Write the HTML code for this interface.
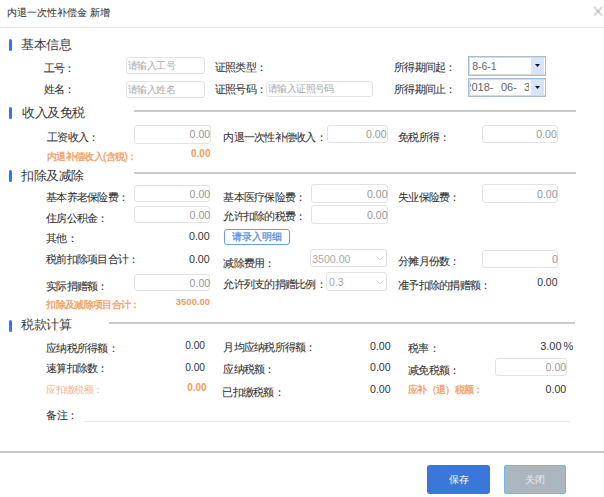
<!DOCTYPE html><html><head><meta charset="utf-8"><style>
*{margin:0;padding:0;box-sizing:border-box}
html,body{width:604px;height:497px;overflow:hidden;background:#fff}
body{position:relative;font-family:"Liberation Sans",sans-serif;}
.t{position:absolute;white-space:nowrap;line-height:1.5}
.b{position:absolute}
</style></head><body><div class="b" style="left:0px;top:27px;width:604px;height:1px;background:#e9e9e9"></div><svg class="b" style="left:588px;top:1px" width="16" height="16" viewBox="0 0 16 16"><line x1="6.6" y1="6.6" x2="13.6" y2="14.2" stroke="#000" stroke-opacity="0.14" stroke-width="2.3" stroke-linecap="round"/><line x1="13.6" y1="6.6" x2="6.6" y2="14.2" stroke="#000" stroke-opacity="0.14" stroke-width="2.3" stroke-linecap="round"/></svg><div class="b" style="left:8.7px;top:39px;width:3.200000000000001px;height:12.200000000000003px;background:#3374f3;border-radius:1.6px"></div><div class="b" style="left:8.7px;top:107px;width:3.200000000000001px;height:12.200000000000003px;background:#3374f3;border-radius:1.6px"></div><div class="b" style="left:8.7px;top:170px;width:3.200000000000001px;height:12.199999999999989px;background:#3374f3;border-radius:1.6px"></div><div class="b" style="left:8.7px;top:320px;width:3.200000000000001px;height:12.199999999999989px;background:#3374f3;border-radius:1.6px"></div><div class="b" style="left:134px;top:110px;width:442px;height:2px;background:#cbcbcb"></div><div class="b" style="left:134px;top:172px;width:442px;height:2px;background:#cbcbcb"></div><div class="b" style="left:109px;top:322px;width:466px;height:2px;background:#cbcbcb"></div><div class="b" style="left:126px;top:57px;width:79px;height:17px;border:1px solid #e3e3e3;border-radius:3px;background:#fff"></div><div class="b" style="left:126px;top:81px;width:79px;height:17px;border:1px solid #e3e3e3;border-radius:3px;background:#fff"></div><div class="b" style="left:266px;top:81px;width:107px;height:16px;border:1px solid #e3e3e3;border-radius:3px;background:#fff"></div><div class="b" style="left:134px;top:125px;width:77px;height:19px;border:1px solid #e3e3e3;border-radius:3px;background:#fff"></div><div class="b" style="left:327px;top:125px;width:61px;height:18px;border:1px solid #e3e3e3;border-radius:3px;background:#fff"></div><div class="b" style="left:482px;top:125px;width:76px;height:18px;border:1px solid #e3e3e3;border-radius:3px;background:#fff"></div><div class="b" style="left:134px;top:185px;width:76px;height:17px;border:1px solid #e3e3e3;border-radius:3px;background:#fff"></div><div class="b" style="left:134px;top:206px;width:76px;height:17px;border:1px solid #e3e3e3;border-radius:3px;background:#fff"></div><div class="b" style="left:311px;top:184px;width:77px;height:19px;border:1px solid #e3e3e3;border-radius:3px;background:#fff"></div><div class="b" style="left:311px;top:205px;width:77px;height:19px;border:1px solid #e3e3e3;border-radius:3px;background:#fff"></div><div class="b" style="left:482px;top:184px;width:76px;height:19px;border:1px solid #e3e3e3;border-radius:3px;background:#fff"></div><div class="b" style="left:134px;top:274px;width:76px;height:17px;border:1px solid #e3e3e3;border-radius:3px;background:#fff"></div><div class="b" style="left:310px;top:249px;width:77px;height:18px;border:1px solid #e3e3e3;border-radius:3px;background:#fff"></div><div class="b" style="left:326px;top:272px;width:61px;height:19px;border:1px solid #e3e3e3;border-radius:3px;background:#fff"></div><div class="b" style="left:482px;top:250px;width:76px;height:18px;border:1px solid #e3e3e3;border-radius:3px;background:#fff"></div><div class="b" style="left:495px;top:358px;width:72px;height:18px;border:1px solid #e3e3e3;border-radius:3px;background:#fff"></div><svg class="b" style="left:375.5px;top:256px" width="8" height="5" viewBox="0 0 8 5"><path d="M0.5 0.5 L4 4 L7.5 0.5" fill="none" stroke="#d8d8d8" stroke-width="1"/></svg><svg class="b" style="left:375.5px;top:279.5px" width="8" height="5" viewBox="0 0 8 5"><path d="M0.5 0.5 L4 4 L7.5 0.5" fill="none" stroke="#d8d8d8" stroke-width="1"/></svg><div class="b" style="left:468px;top:56px;width:78px;height:20px;border:1px solid #a9bcd6;background:#fff"></div><div class="b" style="left:469px;top:57px;width:76px;height:18px;border:1px solid #d9d9d9;border-right:none"></div><div class="b" style="left:531px;top:58px;width:13px;height:16px;background:#d7e5f7"></div><svg class="b" style="left:535px;top:64.0px" width="5" height="3" viewBox="0 0 5 3"><path d="M0 0 L5 0 L2.5 3 Z" fill="#111"/></svg><div class="b" style="left:468px;top:78px;width:78px;height:19px;border:1px solid #a9bcd6;background:#fff"></div><div class="b" style="left:469px;top:79px;width:76px;height:17px;border:1px solid #d9d9d9;border-right:none"></div><div class="b" style="left:531px;top:80px;width:13px;height:15px;background:#d7e5f7"></div><svg class="b" style="left:535px;top:85.5px" width="5" height="3" viewBox="0 0 5 3"><path d="M0 0 L5 0 L2.5 3 Z" fill="#111"/></svg><div class="b" style="left:224px;top:229px;width:66px;height:16px;border:1px solid #6a9de9;border-radius:3px;background:#fff"></div><div class="b" style="left:84px;top:421px;width:486px;height:1px;background:#e8e8e8"></div><div class="b" style="left:0px;top:451px;width:604px;height:2px;background:#c6c6c6"></div><div class="b" style="left:427px;top:465px;width:63px;height:29px;background:#3b77d9;border-radius:3px"></div><div class="b" style="left:504px;top:465px;width:62px;height:29px;background:#acb6be;border:1px solid #6cb8ec;border-radius:2px"></div><div class="b" style="left:470px;top:79px;width:59px;height:17px;overflow:hidden;color:#666;font-size:11px"><div class="t" style="right:35.5px;top:0px;line-height:17px">2018-</div><div class="t" style="left:31px;top:0px;line-height:17px">06-</div><div class="t" style="left:54px;top:0px;line-height:17px">30</div></div><div id="title" class="t" style="left:7.00px;top:5.50px;font-size:9.70px;color:#333;font-weight:normal;letter-spacing:0px;-webkit-text-stroke:0.07px #333">内退一次性补偿金 新增</div><div id="s1" class="t" style="left:21.20px;top:35.35px;font-size:13.00px;color:#3a3a3a;font-weight:normal;letter-spacing:-0.5px">基本信息</div><div id="s2" class="t" style="left:22.00px;top:103.10px;font-size:13.00px;color:#3a3a3a;font-weight:normal;letter-spacing:-0.5px">收入及免税</div><div id="s3" class="t" style="left:21.40px;top:165.50px;font-size:13.00px;color:#3a3a3a;font-weight:normal;letter-spacing:-0.5px">扣除及减除</div><div id="s4" class="t" style="left:21.40px;top:315.40px;font-size:13.00px;color:#3a3a3a;font-weight:normal;letter-spacing:-0.5px">税款计算</div><div id="l1" class="t" style="left:43.60px;top:60.00px;font-size:11.00px;color:#333;font-weight:normal;letter-spacing:-0.75px;-webkit-text-stroke:0.07px #333">工号：</div><div id="l2" class="t" style="left:43.60px;top:81.20px;font-size:11.00px;color:#333;font-weight:normal;letter-spacing:-0.75px;-webkit-text-stroke:0.07px #333">姓名：</div><div id="l3" class="t" style="left:214.80px;top:59.20px;font-size:11.00px;color:#333;font-weight:normal;letter-spacing:-0.75px;-webkit-text-stroke:0.07px #333">证照类型：</div><div id="l4" class="t" style="left:214.80px;top:80.75px;font-size:11.00px;color:#333;font-weight:normal;letter-spacing:-0.75px;-webkit-text-stroke:0.07px #333">证照号码：</div><div id="l5" class="t" style="left:394.00px;top:58.85px;font-size:11.00px;color:#333;font-weight:normal;letter-spacing:-0.75px;-webkit-text-stroke:0.07px #333">所得期间起：</div><div id="l6" class="t" style="left:394.00px;top:80.50px;font-size:11.00px;color:#333;font-weight:normal;letter-spacing:-0.75px;-webkit-text-stroke:0.07px #333">所得期间止：</div><div id="l7" class="t" style="left:47.00px;top:128.80px;font-size:11.00px;color:#333;font-weight:normal;letter-spacing:-0.75px;-webkit-text-stroke:0.07px #333">工资收入：</div><div id="l8" class="t" style="left:47.00px;top:149.25px;font-size:10.00px;color:#f39c5f;font-weight:normal;letter-spacing:-0.65px;-webkit-text-stroke:0.3px #f39c5f">内退补偿收入(含税)：</div><div id="l9" class="t" style="left:223.40px;top:128.50px;font-size:11.00px;color:#333;font-weight:normal;letter-spacing:-0.75px;-webkit-text-stroke:0.07px #333">内退一次性补偿收入：</div><div id="l10" class="t" style="left:398.00px;top:129.00px;font-size:11.00px;color:#333;font-weight:normal;letter-spacing:-0.75px;-webkit-text-stroke:0.07px #333">免税所得：</div><div id="l11" class="t" style="left:46.20px;top:188.55px;font-size:11.00px;color:#333;font-weight:normal;letter-spacing:-0.75px;-webkit-text-stroke:0.07px #333">基本养老保险费：</div><div id="l12" class="t" style="left:46.20px;top:209.90px;font-size:11.00px;color:#333;font-weight:normal;letter-spacing:-0.75px;-webkit-text-stroke:0.07px #333">住房公积金：</div><div id="l13" class="t" style="left:46.20px;top:230.00px;font-size:11.00px;color:#333;font-weight:normal;letter-spacing:-0.75px;-webkit-text-stroke:0.07px #333">其他：</div><div id="l14" class="t" style="left:223.40px;top:189.05px;font-size:11.00px;color:#333;font-weight:normal;letter-spacing:-0.75px;-webkit-text-stroke:0.07px #333">基本医疗保险费：</div><div id="l15" class="t" style="left:223.40px;top:208.20px;font-size:11.00px;color:#333;font-weight:normal;letter-spacing:-0.75px;-webkit-text-stroke:0.07px #333">允许扣除的税费：</div><div id="l16" class="t" style="left:398.00px;top:188.95px;font-size:11.00px;color:#333;font-weight:normal;letter-spacing:-0.75px;-webkit-text-stroke:0.07px #333">失业保险费：</div><div id="l17" class="t" style="left:46.20px;top:251.00px;font-size:11.00px;color:#333;font-weight:normal;letter-spacing:-0.75px;-webkit-text-stroke:0.07px #333">税前扣除项目合计：</div><div id="l18" class="t" style="left:46.20px;top:277.50px;font-size:11.00px;color:#333;font-weight:normal;letter-spacing:-0.75px;-webkit-text-stroke:0.07px #333">实际捐赠额：</div><div id="l19" class="t" style="left:46.20px;top:296.50px;font-size:10.00px;color:#f39c5f;font-weight:normal;letter-spacing:-0.65px;-webkit-text-stroke:0.3px #f39c5f">扣除及减除项目合计：</div><div id="l20" class="t" style="left:223.40px;top:254.65px;font-size:11.00px;color:#333;font-weight:normal;letter-spacing:-0.75px;-webkit-text-stroke:0.07px #333">减除费用：</div><div id="l21" class="t" style="left:223.40px;top:275.70px;font-size:11.00px;color:#333;font-weight:normal;letter-spacing:-0.75px;-webkit-text-stroke:0.07px #333">允许列支的捐赠比例：</div><div id="l22" class="t" style="left:398.00px;top:252.95px;font-size:11.00px;color:#333;font-weight:normal;letter-spacing:-0.75px;-webkit-text-stroke:0.07px #333">分摊月份数：</div><div id="l23" class="t" style="left:398.00px;top:276.55px;font-size:11.00px;color:#333;font-weight:normal;letter-spacing:-0.75px;-webkit-text-stroke:0.07px #333">准予扣除的捐赠额：</div><div id="l24" class="t" style="left:46.20px;top:339.50px;font-size:11.00px;color:#333;font-weight:normal;letter-spacing:-0.75px;-webkit-text-stroke:0.07px #333">应纳税所得额：</div><div id="l25" class="t" style="left:46.20px;top:359.65px;font-size:11.00px;color:#333;font-weight:normal;letter-spacing:-0.75px;-webkit-text-stroke:0.07px #333">速算扣除数：</div><div id="l26" class="t" style="left:46.20px;top:382.45px;font-size:10.00px;color:#f6b48e;font-weight:normal;letter-spacing:-0.65px">应扣缴税额：</div><div id="l27" class="t" style="left:46.40px;top:406.90px;font-size:11.00px;color:#333;font-weight:normal;letter-spacing:-0.75px;-webkit-text-stroke:0.07px #333">备注：</div><div id="l28" class="t" style="left:223.40px;top:339.40px;font-size:11.00px;color:#333;font-weight:normal;letter-spacing:-0.75px;-webkit-text-stroke:0.07px #333">月均应纳税所得额：</div><div id="l29" class="t" style="left:223.40px;top:361.45px;font-size:11.00px;color:#333;font-weight:normal;letter-spacing:-0.75px;-webkit-text-stroke:0.07px #333">应纳税额：</div><div id="l30" class="t" style="left:222.40px;top:384.35px;font-size:11.00px;color:#333;font-weight:normal;letter-spacing:-0.75px;-webkit-text-stroke:0.07px #333">已扣缴税额：</div><div id="l31" class="t" style="left:408.00px;top:340.25px;font-size:11.00px;color:#333;font-weight:normal;letter-spacing:-0.75px;-webkit-text-stroke:0.07px #333">税率：</div><div id="l32" class="t" style="left:408.00px;top:362.30px;font-size:11.00px;color:#333;font-weight:normal;letter-spacing:-0.75px;-webkit-text-stroke:0.07px #333">减免税额：</div><div id="l33" class="t" style="left:408.00px;top:381.55px;font-size:10.00px;color:#f39c5f;font-weight:normal;letter-spacing:-0.65px;-webkit-text-stroke:0.3px #f39c5f">应补（退）税额：</div><div id="p1" class="t" style="left:128.00px;top:58.35px;font-size:10.00px;color:#aaa;font-weight:normal;letter-spacing:-0.55px">请输入工号</div><div id="p2" class="t" style="left:128.00px;top:81.50px;font-size:10.00px;color:#aaa;font-weight:normal;letter-spacing:-0.55px">请输入姓名</div><div id="p3" class="t" style="left:267.80px;top:81.00px;font-size:10.00px;color:#aaa;font-weight:normal;letter-spacing:-0.55px">请输入证照号码</div><div id="v1" class="t" style="left:191.00px;top:146.45px;font-size:10.00px;color:#f39c5f;font-weight:bold;letter-spacing:0px">0.00</div><div id="v2" class="t" style="left:189.00px;top:228.70px;font-size:10.60px;color:#333;font-weight:normal;letter-spacing:0px">0.00</div><div id="v3" class="t" style="left:189.00px;top:252.15px;font-size:10.60px;color:#333;font-weight:normal;letter-spacing:0px">0.00</div><div id="v4" class="t" style="left:175.80px;top:294.95px;font-size:9.50px;color:#f39c5f;font-weight:bold;letter-spacing:0px">3500.00</div><div id="v5" class="t" style="left:537.20px;top:275.45px;font-size:10.40px;color:#333;font-weight:normal;letter-spacing:0px">0.00</div><div id="v6" class="t" style="left:185.20px;top:338.05px;font-size:10.20px;color:#333;font-weight:normal;letter-spacing:0px">0.00</div><div id="v7" class="t" style="left:185.20px;top:360.15px;font-size:10.20px;color:#333;font-weight:normal;letter-spacing:0px">0.00</div><div id="v8" class="t" style="left:187.20px;top:380.00px;font-size:10.00px;color:#f39c5f;font-weight:bold;letter-spacing:0px">0.00</div><div id="v9" class="t" style="left:370.00px;top:338.70px;font-size:10.60px;color:#333;font-weight:normal;letter-spacing:0px">0.00</div><div id="v10" class="t" style="left:370.00px;top:360.25px;font-size:10.60px;color:#333;font-weight:normal;letter-spacing:0px">0.00</div><div id="v11" class="t" style="left:370.00px;top:381.65px;font-size:10.60px;color:#333;font-weight:normal;letter-spacing:0px">0.00</div><div id="v12" class="t" style="left:540.20px;top:338.05px;font-size:11.00px;color:#333;font-weight:normal;letter-spacing:0px">3.00</div><div id="v12b" class="t" style="left:563.40px;top:337.80px;font-size:11.00px;color:#333;font-weight:normal;letter-spacing:0px">%</div><div id="v13" class="t" style="left:545.60px;top:382.10px;font-size:10.60px;color:#333;font-weight:normal;letter-spacing:0px">0.00</div><div id="iv1" class="t" style="left:189.60px;top:126.75px;font-size:10.60px;color:#999;font-weight:normal;letter-spacing:0px">0.00</div><div id="iv2" class="t" style="left:366.00px;top:127.15px;font-size:10.60px;color:#999;font-weight:normal;letter-spacing:0px">0.00</div><div id="iv3" class="t" style="left:536.20px;top:127.15px;font-size:10.60px;color:#999;font-weight:normal;letter-spacing:0px">0.00</div><div id="iv4" class="t" style="left:189.60px;top:186.50px;font-size:10.60px;color:#999;font-weight:normal;letter-spacing:0px">0.00</div><div id="iv5" class="t" style="left:189.60px;top:207.50px;font-size:10.60px;color:#999;font-weight:normal;letter-spacing:0px">0.00</div><div id="iv6" class="t" style="left:367.00px;top:186.50px;font-size:10.60px;color:#999;font-weight:normal;letter-spacing:0px">0.00</div><div id="iv7" class="t" style="left:367.00px;top:207.50px;font-size:10.60px;color:#999;font-weight:normal;letter-spacing:0px">0.00</div><div id="iv8" class="t" style="left:537.00px;top:186.50px;font-size:10.60px;color:#999;font-weight:normal;letter-spacing:0px">0.00</div><div id="iv9" class="t" style="left:189.60px;top:275.50px;font-size:10.60px;color:#999;font-weight:normal;letter-spacing:0px">0.00</div><div id="iv10" class="t" style="left:552.00px;top:251.50px;font-size:10.60px;color:#999;font-weight:normal;letter-spacing:0px">0</div><div id="iv11" class="t" style="left:545.60px;top:360.45px;font-size:10.60px;color:#999;font-weight:normal;letter-spacing:0px">0.00</div><div id="sv1" class="t" style="left:312.20px;top:252.15px;font-size:10.60px;color:#aaa;font-weight:normal;letter-spacing:0px">3500.00</div><div id="sv2" class="t" style="left:329.00px;top:274.75px;font-size:10.60px;color:#aaa;font-weight:normal;letter-spacing:0px">0.3</div><div id="d1" class="t" style="left:472.20px;top:59.15px;font-size:10.50px;color:#666;font-weight:normal;letter-spacing:0px">8-6-1</div><div id="btn1" class="t" style="left:232.30px;top:228.85px;font-size:10.10px;color:#5a8ee6;font-weight:normal;letter-spacing:0px;-webkit-text-stroke:0.3px #5a8ee6">请录入明细</div><div id="btn2" class="t" style="left:448.60px;top:473.40px;font-size:9.50px;color:#fff;font-weight:normal;letter-spacing:0px">保存</div><div id="btn3" class="t" style="left:525.40px;top:473.40px;font-size:9.50px;color:#e8ecef;font-weight:normal;letter-spacing:0px">关闭</div></body></html>
